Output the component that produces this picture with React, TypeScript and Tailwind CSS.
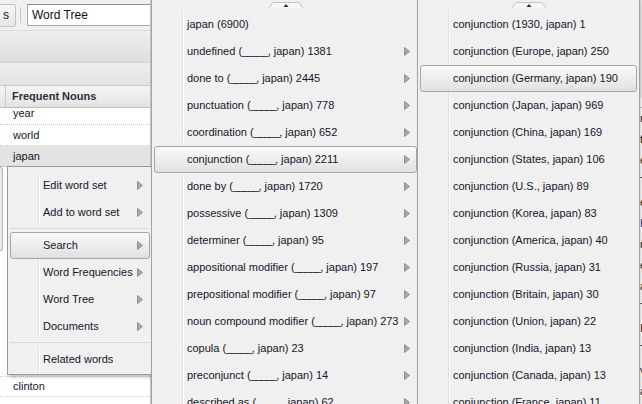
import clsx from 'clsx';

type Item = { label: string; sub?: boolean; active?: boolean; sep?: boolean };

const contextItems: Item[] = [
  { label: 'Edit word set', sub: true },
  { label: 'Add to word set', sub: true },
  { label: '', sep: true },
  { label: 'Search', sub: true, active: true },
  { label: 'Word Frequencies', sub: true },
  { label: 'Word Tree', sub: true },
  { label: 'Documents', sub: true },
  { label: '', sep: true },
  { label: 'Related words' },
];

const relationItems: Item[] = [
  { label: 'japan (6900)' },
  { label: 'undefined (_____, japan) 1381', sub: true },
  { label: 'done to (_____, japan) 2445', sub: true },
  { label: 'punctuation (_____, japan) 778', sub: true },
  { label: 'coordination (_____, japan) 652', sub: true },
  { label: 'conjunction (_____, japan) 2211', sub: true, active: true },
  { label: 'done by (_____, japan) 1720', sub: true },
  { label: 'possessive (_____, japan) 1309', sub: true },
  { label: 'determiner (_____, japan) 95', sub: true },
  { label: 'appositional modifier (_____, japan) 197', sub: true },
  { label: 'prepositional modifier (_____, japan) 97', sub: true },
  { label: 'noun compound modifier (_____, japan) 273', sub: true },
  { label: 'copula (_____, japan) 23', sub: true },
  { label: 'preconjunct (_____, japan) 14', sub: true },
  { label: 'described as (_____, japan) 62', sub: true },
];

const conjunctions: [string, number][] = [
  ['1930', 1],
  ['Europe', 250],
  ['Germany', 190],
  ['Japan', 969],
  ['China', 169],
  ['States', 106],
  ['U.S.', 89],
  ['Korea', 83],
  ['America', 40],
  ['Russia', 31],
  ['Britain', 30],
  ['Union', 22],
  ['India', 13],
  ['Canada', 13],
  ['France', 11],
];

const edgeRows = ['n', 't', 'e', 'T', 'e', 'H', 'n', 'e', 'a', 'T', 'I', 'T', 'v', 'a'];

function Arrow() {
  return (
    <svg width="6" height="9" viewBox="0 0 6 9" className="shrink-0">
      <path d="M0.5 0.5 L5.5 4.5 L0.5 8.5 Z" fill="#a8a8a8" stroke="#808080" strokeWidth="0.8" />
    </svg>
  );
}

function ScrollTab() {
  return (
    <div className="flex h-[11px] justify-center">
      <svg width="36" height="9" viewBox="0 0 36 9">
        <path d="M0.5 8.5 L5 2.5 L31 2.5 L35.5 8.5" fill="#f6f6f6" stroke="#c4c4c4" />
        <path d="M15.5 7 L18 4 L20.5 7 Z" fill="#2a2a2a" />
      </svg>
    </div>
  );
}

function Label({ text }: Readonly<{ text: string }>) {
  // the blank slot is drawn narrower, as in the original menu font
  return (
    <>
      {text.split(/(_+)/).map((part, i) =>
        part.startsWith('_') ? (
          <span key={i} className="tracking-[-1px]">
            {part}
          </span>
        ) : (
          part
        )
      )}
    </>
  );
}

function MenuRow({ item }: Readonly<{ item: Item }>) {
  if (item.sep) {
    return (
      <div className="flex h-[6px] items-center">
        <div className="h-[2px] w-full border-t border-[#d9d9d9] border-b-white" />
      </div>
    );
  }
  return (
    <div
      className={clsx(
        'flex h-[27px] items-center',
        item.active && 'rounded-[3px] border border-[#a6a6a6] bg-gradient-to-b from-[#fafafa] to-[#e1e1e1]'
      )}
    >
      <div
        className={clsx(
          'h-full shrink-0',
          item.active ? 'w-[28px]' : 'w-[29px] border-r border-[#e0e0e0] shadow-[1px_0_0_#fbfbfb]'
        )}
      />
      <span className="flex-1 whitespace-nowrap pl-[4px]">
        <Label text={item.label} />
      </span>
      {item.sub && (
        <span className={item.active ? 'mr-[6px]' : 'mr-[7px]'}>
          <Arrow />
        </span>
      )}
    </div>
  );
}

export default function App() {
  return (
    <div className="relative flex h-[404px] w-[642px] overflow-hidden bg-white font-['Liberation_Sans',Arial,sans-serif] text-[11px] text-[#15152a]">
      <aside className="flex w-[150px] shrink-0 flex-col overflow-hidden bg-white">
        <div className="flex h-[30px] shrink-0 items-center bg-[#f0f0f0]">
          <div className="flex h-[23px] w-[16px] items-center justify-end rounded-r-[3px] border border-l-0 border-[#c3c3c3] bg-gradient-to-b from-[#f7f7f7] to-[#e6e6e6] pr-[6px] text-[12px]">
            s
          </div>
          <div className="mx-[4px] h-[16px] w-[2px] border-l border-[#c8c8c8] border-r-white" />
          <div className="ml-[1px] flex h-[22px] flex-1 items-center border border-r-0 border-[#a9a9a9] border-t-[#8e8e8e] bg-white pl-[4px] text-[12px] text-[#111]">
            Word Tree
          </div>
        </div>
        <div className="h-[33px] shrink-0 border-y border-[#cfcfcf] border-t-[#dadada] bg-gradient-to-b from-[#efefef] to-[#dedede]" />
        <div className="h-[23px] shrink-0 border-b border-[#c9c9c9] bg-gradient-to-b from-[#eeeeee] to-[#e3e3e3]" />
        <div className="flex h-[22px] shrink-0 border-b border-[#bdbdbd] bg-gradient-to-b from-[#f5f5f5] to-[#e3e3e3]">
          <div className="w-[6px] border-r border-[#c9c9c9]" />
          <div className="flex items-center pl-[6px] font-bold text-[#2e2e3a]">Frequent Nouns</div>
        </div>
        <div className="h-[17px] shrink-0 overflow-hidden border-b border-dotted border-[#c6c6c6]">
          <div className="-mt-[5px] flex h-[21px] items-center pl-[13px]">year</div>
        </div>
        <div className="flex h-[21px] shrink-0 items-center border-b border-dotted border-[#c6c6c6] pl-[13px]">
          world
        </div>
        <div className="flex h-[21px] shrink-0 items-center border-b border-dotted border-[#b6b6b6] bg-[#e3e3e3] pl-[13px]">
          japan
        </div>
        <div className="flex h-[209px] shrink-0 items-start">
          <div className="h-[84px] w-[3px] rounded-r-[3px] border border-l-0 border-[#b5b5b5] bg-[#e9e9e9]" />
        </div>
        <div className="flex h-[21px] shrink-0 items-center border-y border-dotted border-[#d0d0d0] pl-[13px]">
          clinton
        </div>
        <div className="h-[21px] shrink-0" />
      </aside>
      <div className="w-[1px] shrink-0 bg-[#c8c8c8]" />
      <main className="flex flex-1">
        <div className="flex-1 bg-[#ececec]" />
        <div className="flex w-[2px] shrink-0 flex-col overflow-hidden">
          <div className="h-[98px] shrink-0 bg-[#ececec]" />
          <div className="h-[10px] shrink-0 border-b border-[#c8c8c8] bg-white" />
          {edgeRows.map((c, i) => (
            <div
              key={i}
              className={clsx(
                'flex h-[21px] shrink-0 items-center bg-white leading-none',
                i === 5 ? 'text-[#1a3a9a]' : 'text-[#222]'
              )}
            >
              {c}
            </div>
          ))}
        </div>
      </main>

      <div className="absolute left-[7px] top-[166px] w-[146px] border border-[#9a9a9a] bg-[#f0f0f0] px-[2px] pb-[1px] pt-[5px] shadow-[2px_2px_3px_rgba(0,0,0,0.25)]">
        {contextItems.map((it, i) => (
          <MenuRow key={i} item={it} />
        ))}
      </div>

      <div className="absolute left-[151px] top-0 h-[420px] w-[268px] border-l border-[#a2a2a2] bg-[#f0f0f0] px-[2px] shadow-[2px_0_3px_rgba(0,0,0,0.2)]">
        <ScrollTab />
        {relationItems.map((it, i) => (
          <MenuRow key={i} item={it} />
        ))}
      </div>

      <div className="absolute left-[417px] top-0 h-[420px] w-[223px] border-x border-[#a2a2a2] bg-[#f0f0f0] px-[2px] shadow-[1px_0_2px_rgba(0,0,0,0.2)]">
        <ScrollTab />
        {conjunctions.map(([w, n], i) => (
          <MenuRow key={i} item={{ label: `conjunction (${w}, japan) ${n}`, active: i === 2 }} />
        ))}
      </div>
    </div>
  );
}
